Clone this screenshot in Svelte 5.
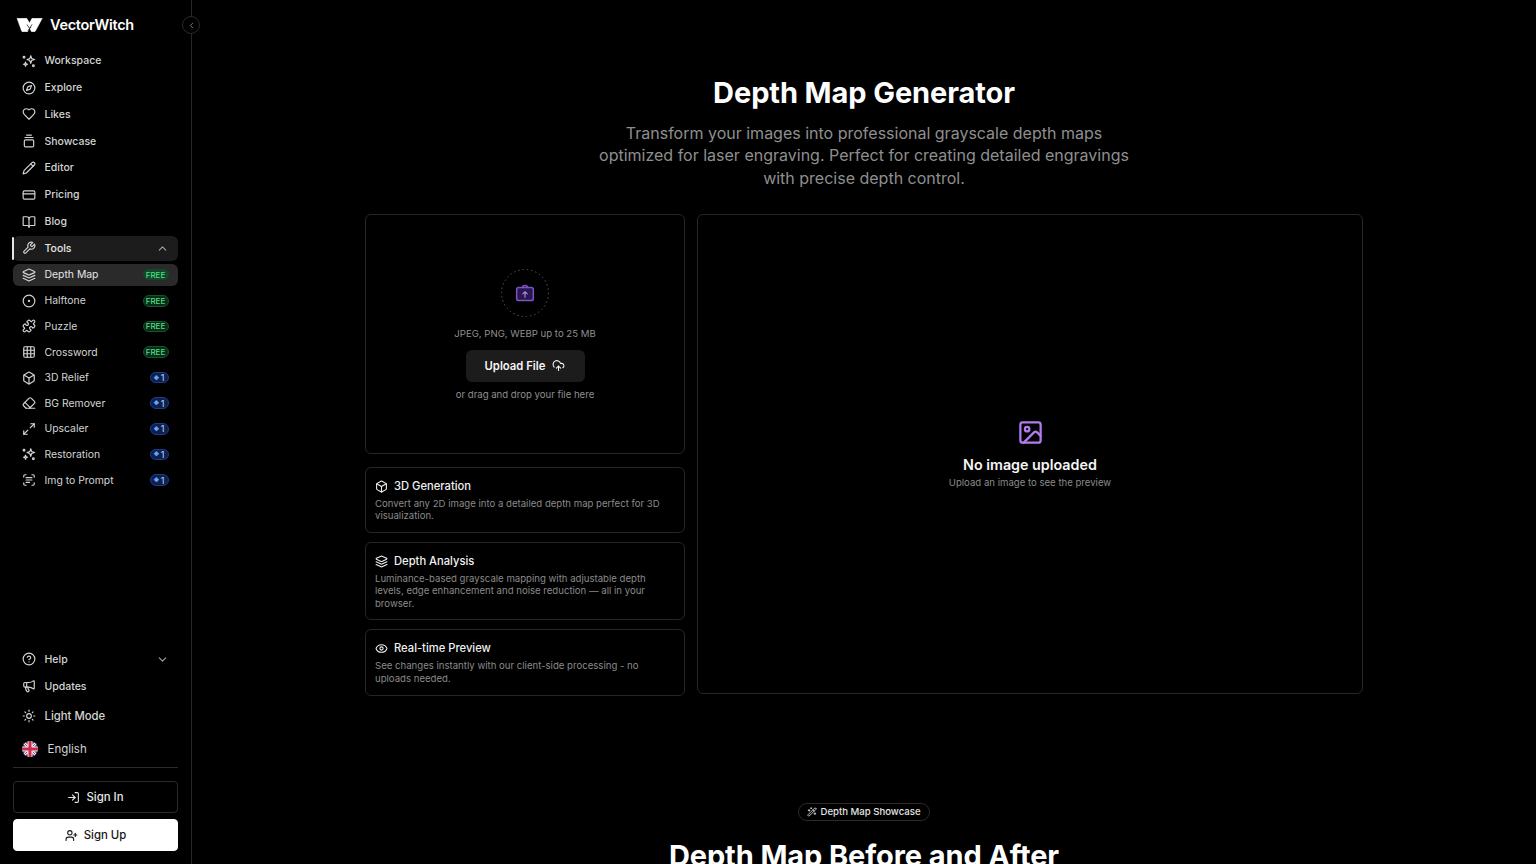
<script>
  const c10 = 'M22 12a10 10 0 1 1-20 0a10 10 0 1 1 20 0';
  const icons = {
    sparkle: ['M15 3l1.6 4.9 4.9 1.6-4.9 1.6L15 16l-1.6-4.9-4.9-1.6 4.9-1.6z', 'M6 14l.9 2.6 2.6.9-2.6.9L6 21l-.9-2.6-2.6-.9 2.6-.9z', 'M5 5.5a1.5 1.5 0 1 1-3 0a1.5 1.5 0 1 1 3 0', 'M21 20a1.5 1.5 0 1 1-3 0a1.5 1.5 0 1 1 3 0'],
    compass: [c10, 'm16.24 7.76-1.804 5.411a2 2 0 0 1-1.265 1.265L7.76 16.24l1.804-5.411a2 2 0 0 1 1.265-1.265z'],
    heart: ['M19 14c1.49-1.46 3-3.21 3-5.5A5.5 5.5 0 0 0 16.5 3c-1.76 0-3 .5-4.5 2-1.5-1.5-2.74-2-4.5-2A5.5 5.5 0 0 0 2 8.5c0 2.3 1.5 4.05 3 5.5l7 7Z'],
    gallery: ['M8 2h8', 'M5 6h14', 'M6 10h12a2 2 0 0 1 2 2v8a2 2 0 0 1-2 2H6a2 2 0 0 1-2-2v-8a2 2 0 0 1 2-2z'],
    pencil: ['M21.174 6.812a1 1 0 0 0-3.986-3.987L3.842 16.174a2 2 0 0 0-.5.83l-1.321 4.352a.5.5 0 0 0 .623.622l4.353-1.32a2 2 0 0 0 .83-.497z', 'm15 5 4 4'],
    card: ['M4 5h16a2 2 0 0 1 2 2v10a2 2 0 0 1-2 2H4a2 2 0 0 1-2-2V7a2 2 0 0 1 2-2z', 'M2 10h20'],
    book: ['M12 7v14', 'M3 18a1 1 0 0 1-1-1V4a1 1 0 0 1 1-1h5a4 4 0 0 1 4 4 4 4 0 0 1 4-4h5a1 1 0 0 1 1 1v13a1 1 0 0 1-1 1h-6a3 3 0 0 0-3 3 3 3 0 0 0-3-3z'],
    wrench: ['M14.7 6.3a1 1 0 0 0 0 1.4l1.6 1.6a1 1 0 0 0 1.4 0l3.77-3.77a6 6 0 0 1-7.94 7.94l-6.91 6.91a2.12 2.12 0 0 1-3-3l6.91-6.91a6 6 0 0 1 7.94-7.94l-3.76 3.76z'],
    up: ['m18 15-6-6-6 6'],
    down: ['m6 9 6 6 6-6'],
    left: ['m15 18-6-6 6-6'],
    layers: ['M12.83 2.18a2 2 0 0 0-1.66 0L2.6 6.08a1 1 0 0 0 0 1.83l8.58 3.91a2 2 0 0 0 1.66 0l8.58-3.9a1 1 0 0 0 0-1.83Z', 'm22 17.65-9.17 4.16a2 2 0 0 1-1.66 0L2 17.65', 'm22 12.65-9.17 4.16a2 2 0 0 1-1.66 0L2 12.65'],
    dot: [c10, 'M13 12a1 1 0 1 1-2 0a1 1 0 1 1 2 0'],
    puzzle: ['M19.439 7.85c-.049.322.059.648.289.878l1.568 1.568c.47.47.706 1.087.706 1.704s-.235 1.233-.706 1.704l-1.611 1.611a.98.98 0 0 1-.837.276c-.47-.07-.802-.48-.968-.925a2.501 2.501 0 1 0-3.214 3.214c.446.166.855.497.925.968a.979.979 0 0 1-.276.837l-1.61 1.61a2.404 2.404 0 0 1-1.705.707 2.402 2.402 0 0 1-1.704-.706l-1.568-1.568a1.026 1.026 0 0 0-.877-.29c-.493.074-.84.504-1.02.968a2.5 2.5 0 1 1-3.237-3.237c.464-.18.894-.527.967-1.02a1.026 1.026 0 0 0-.289-.877l-1.568-1.568A2.402 2.402 0 0 1 1.998 12c0-.617.236-1.234.706-1.704L4.23 8.77c.24-.24.581-.353.917-.303.515.077.877.528 1.073 1.01a2.5 2.5 0 1 0 3.259-3.259c-.482-.196-.933-.558-1.01-1.073-.05-.336.062-.676.303-.917l1.525-1.525A2.402 2.402 0 0 1 12 1.998c.617 0 1.234.236 1.704.706l1.568 1.568c.23.23.556.338.877.29.493-.074.84-.504 1.02-.968a2.5 2.5 0 1 1 3.237 3.237c-.464.18-.894.527-.967 1.02Z'],
    grid: ['M5 3h14a2 2 0 0 1 2 2v14a2 2 0 0 1-2 2H5a2 2 0 0 1-2-2V5a2 2 0 0 1 2-2z', 'M3 9h18', 'M3 15h18', 'M9 3v18', 'M15 3v18'],
    box: ['M21 8a2 2 0 0 0-1-1.73l-7-4a2 2 0 0 0-2 0l-7 4A2 2 0 0 0 3 8v8a2 2 0 0 0 1 1.73l7 4a2 2 0 0 0 2 0l7-4A2 2 0 0 0 21 16Z', 'm3.3 7 8.7 5 8.7-5', 'M12 22V12'],
    eraser: ['m7 21-4.3-4.3c-1-1-1-2.5 0-3.4l9.6-9.6c1-1 2.5-1 3.4 0l5.6 5.6c1 1 1 2.5 0 3.4L13 21', 'M22 21H7', 'm5 11 9 9'],
    expand: ['M15 3h6v6', 'm21 3-7 7', 'M3 15v6h6', 'm3 21 7-7'],
    scan: ['M3 7V5a2 2 0 0 1 2-2h2', 'M17 3h2a2 2 0 0 1 2 2v2', 'M21 17v2a2 2 0 0 1-2 2h-2', 'M7 21H5a2 2 0 0 1-2-2v-2', 'M7 8h10', 'M7 12h10', 'M7 16h6'],
    help: [c10, 'M9.09 9a3 3 0 0 1 5.83 1c0 2-3 3-3 3', 'M12 17h.01'],
    mega: ['M11 6a13 13 0 0 0 8.4-2.8A1 1 0 0 1 21 4v12a1 1 0 0 1-1.6.8A13 13 0 0 0 11 14H5a2 2 0 0 1-2-2V8a2 2 0 0 1 2-2z', 'M6 14a12 12 0 0 0 2.4 7.2 2 2 0 0 0 3.2-2.4A8 8 0 0 1 10 14', 'M8 6v8'],
    sun: ['M16 12a4 4 0 1 1-8 0a4 4 0 1 1 8 0', 'M12 2v2', 'M12 20v2', 'm4.93 4.93 1.41 1.41', 'm17.66 17.66 1.41 1.41', 'M2 12h2', 'M20 12h2', 'm6.34 17.66-1.41 1.41', 'm19.07 4.93-1.41 1.41'],
    login: ['m10 17 5-5-5-5', 'M15 12H3', 'M15 3h4a2 2 0 0 1 2 2v14a2 2 0 0 1-2 2h-4'],
    userplus: ['M16 21v-2a4 4 0 0 0-4-4H6a4 4 0 0 0-4 4v2', 'M13 7a4 4 0 1 1-8 0a4 4 0 1 1 8 0', 'M19 8v6', 'M22 11h-6'],
    cloud: ['M12 13v8', 'M4 14.899A7 7 0 1 1 15.71 8h1.79a4.5 4.5 0 0 1 2.5 8.242', 'm8 17 4-4 4 4'],
    eye: ['M2.062 12.348a1 1 0 0 1 0-.696 10.75 10.75 0 0 1 19.876 0 1 1 0 0 1 0 .696 10.75 10.75 0 0 1-19.876 0', 'M15 12a3 3 0 1 1-6 0a3 3 0 1 1 6 0'],
    image: ['M5 3h14a2 2 0 0 1 2 2v14a2 2 0 0 1-2 2H5a2 2 0 0 1-2-2V5a2 2 0 0 1 2-2z', 'M11 9a2 2 0 1 1-4 0a2 2 0 1 1 4 0', 'm21 15-3.086-3.086a2 2 0 0 0-2.828 0L6 21'],
    wand: ['m21.64 3.64-1.28-1.28a1.21 1.21 0 0 0-1.72 0L2.36 18.64a1.21 1.21 0 0 0 0 1.72l1.28 1.28a1.2 1.2 0 0 0 1.72 0L21.64 5.36a1.2 1.2 0 0 0 0-1.72', 'm14 7 3 3', 'M5 6v4', 'M19 14v4', 'M10 2v2', 'M7 8H3', 'M21 16h-4', 'M11 3H9']
  };
  const primary = [
    ['sparkle', 'Workspace'], ['compass', 'Explore'], ['heart', 'Likes'], ['gallery', 'Showcase'],
    ['pencil', 'Editor'], ['card', 'Pricing'], ['book', 'Blog']
  ];
  const tools = [
    ['layers', 'Depth Map', 'free', true], ['dot', 'Halftone', 'free'], ['puzzle', 'Puzzle', 'free'], ['grid', 'Crossword', 'free'],
    ['box', '3D Relief', 'credit'], ['eraser', 'BG Remover', 'credit'], ['expand', 'Upscaler', 'credit'],
    ['sparkle', 'Restoration', 'credit'], ['scan', 'Img to Prompt', 'credit']
  ];
  const features = [
    ['box', '3D Generation', 'Convert any 2D image into a detailed depth map perfect for 3D visualization.'],
    ['layers', 'Depth Analysis', 'Luminance-based grayscale mapping with adjustable depth levels, edge enhancement and noise reduction — all in your browser.'],
    ['eye', 'Real-time Preview', 'See changes instantly with our client-side processing - no uploads needed.']
  ];
</script>

{#snippet icon(name, size, cls = '')}
  <svg class={cls} width={size} height={size} viewBox="0 0 24 24" fill="none" stroke="currentColor" stroke-width="2" stroke-linecap="round" stroke-linejoin="round" aria-hidden="true">
    {#each icons[name] as d}<path {d} />{/each}
  </svg>
{/snippet}

<div class="app">
  <aside class="sidebar">
    <div class="brand">
      <svg class="logo" width="27" height="14" viewBox="0 0 27 14" aria-hidden="true">
        <path d="M1 .3H10.700L13.500 5 16 .3H26.300L19.300 13.200Q19 13.700 18.500 13.700H15.500L13.500 10 11.500 13.700H6.500Q6 13.700 5.700 13.200Z" fill="#fff" stroke="#fff" stroke-width=".5" stroke-linejoin="round" />
        <path d="M11 6.500 13.500 10.500 16 6.500M12 12.500 15 9" fill="none" stroke="#000" stroke-width=".7" />
      </svg>
      <span class="brand-name">VectorWitch</span>
    </div>
    <button class="collapse" aria-label="Collapse sidebar">{@render icon('left', 9)}</button>

    <nav class="nav">
      {#each primary as [ic, label]}
        <div class="item">{@render icon(ic, 14, 'ico')}<span>{label}</span></div>
      {/each}
      <div class="item open">
        {@render icon('wrench', 14, 'ico')}<span>Tools</span>{@render icon('up', 13, 'chev')}
      </div>
    </nav>
    <div class="tools">
      {#each tools as [ic, label, kind, active]}
        <div class="tool" class:active>
          {@render icon(ic, 14, 'ico')}<span>{label}</span>
          {#if kind === 'free'}
            <em class="badge free">FREE</em>
          {:else}
            <em class="badge credit"><i>◆</i>1</em>
          {/if}
        </div>
      {/each}
    </div>

    <div class="foot">
      <div class="item">{@render icon('help', 14, 'ico')}<span>Help</span>{@render icon('down', 13, 'chev')}</div>
      <div class="item">{@render icon('mega', 14, 'ico')}<span>Updates</span></div>
      <div class="item big light">{@render icon('sun', 14, 'ico')}<span>Light Mode</span></div>
      <div class="item big lang">
        <svg class="flag" width="16" height="16" viewBox="0 0 16 16" aria-hidden="true">
          <defs><clipPath id="fc"><circle cx="8" cy="8" r="8" /></clipPath></defs>
          <g clip-path="url(#fc)">
            <rect width="16" height="16" fill="#2b3a7e" />
            <path d="M0 0L16 16M16 0L0 16" stroke="#eee" stroke-width="3" />
            <path d="M0 0L16 16M16 0L0 16" stroke="#cf2a4a" stroke-width="1" />
            <path d="M8 0V16M0 8H16" stroke="#eee" stroke-width="5" />
            <path d="M8 0V16M0 8H16" stroke="#cf2a4a" stroke-width="3" />
          </g>
        </svg>
        <span>English</span>
      </div>
      <div class="rule"></div>
      <button class="btn signin">{@render icon('login', 13)}Sign In</button>
      <button class="btn signup">{@render icon('userplus', 13)}Sign Up</button>
    </div>
  </aside>

  <main class="main">
    <header class="head">
      <h1>Depth Map Generator</h1>
      <p>Transform your images into professional grayscale depth maps optimized for laser engraving. Perfect for creating detailed engravings with precise depth control.</p>
    </header>

    <section class="work">
      <div class="left">
        <div class="card upload">
          <div class="ring">
            <svg class="dots" width="48" height="48" viewBox="0 0 48 48" aria-hidden="true">
              <circle cx="24" cy="24" r="23.500" fill="none" stroke="#555" stroke-width="1" stroke-dasharray="1.500 2.800" />
            </svg>
            <svg class="bag" width="20" height="20" viewBox="0 0 24 24" fill="#2a1650" stroke="#7d52c4" stroke-width="1.800" stroke-linecap="round" stroke-linejoin="round" aria-hidden="true">
              <path d="M9 5.500C9 3.800 10 3 12 3s3 .8 3 2.500" fill="none" />
              <rect x="2" y="5.500" width="20" height="15.500" rx="2.500" />
              <path d="M12 17v-6.500M9.300 13 12 10.500l2.700 2.500" fill="none" stroke="#a98ad8" stroke-width="1.400" />
            </svg>
          </div>
          <div class="hint">JPEG, PNG, WEBP up to 25 MB</div>
          <button class="upbtn">Upload File{@render icon('cloud', 13)}</button>
          <div class="hint alt">or drag and drop your file here</div>
        </div>
        {#each features as [ic, title, text]}
          <div class="card feature">
            <div class="ftitle">{@render icon(ic, 13)}<span>{title}</span></div>
            <p>{text}</p>
          </div>
        {/each}
      </div>
      <div class="card preview">
        <span class="pic">{@render icon('image', 27)}</span>
        <div class="ptitle">No image uploaded</div>
        <div class="psub">Upload an image to see the preview</div>
      </div>
    </section>

    <section class="show">
      <div class="pill">{@render icon('wand', 10)}Depth Map Showcase</div>
      <h2>Depth Map Before and After</h2>
    </section>
  </main>
</div>

<style>
  :global(body) { margin: 0; background: #000; overflow: hidden; }
  * { box-sizing: border-box; }
  .app { display: flex; height: 864px; overflow: hidden; background: #000; color: #fff; font-family: Inter, "Liberation Sans", sans-serif; }
  svg { display: block; flex: none; }

  .sidebar { position: relative; width: 192px; flex: none; height: 100%; border-right: 1px solid #262626; padding: 0 13px 13px; display: flex; flex-direction: column; }
  .brand { height: 47.400px; display: flex; align-items: center; gap: 7px; padding: 2px 0 0 3px; flex: none; }
  .brand-name { font-size: 14.500px; font-weight: 600; letter-spacing: -0.3px; }
  .collapse { position: absolute; top: 16px; right: -9px; width: 18px; height: 18px; border-radius: 50%; border: 1px solid #2a2a2a; background: #000; color: #a3a3a3; display: flex; align-items: center; justify-content: center; padding: 0; z-index: 2; }

  .nav { display: flex; flex-direction: column; flex: none; }
  .item { height: 26.800px; display: flex; align-items: center; gap: 8.500px; padding: 0 9.500px 0 9px; font-size: 10.500px; font-weight: 500; color: #d4d4d4; border-radius: 6px; flex: none; }
  .item span { flex: 1; }
  .ico { color: #d4d4d4; }
  .chev { color: #a3a3a3; }
  .open { position: relative; background: #1c1c1c; color: #e5e5e5; height: 25px; margin-top: .6px; }
  .open::before { content: ""; position: absolute; left: -1px; top: 1px; bottom: 1px; width: 2px; background: #e5e5e5; border-radius: 1px; }

  .tools { display: flex; flex-direction: column; margin-top: 3px; flex: none; }
  .tool { height: 25.600px; display: flex; align-items: center; gap: 8.500px; padding: 0 9.500px 0 9px; font-size: 10.400px; font-weight: 400; color: #d4d4d4; border-radius: 6px; flex: none; }
  .tool span { flex: 1; }
  .tool.active { background: #2a2a2a; height: 22px; margin-bottom: 2.500px; color: #e5e5e5; }
  .badge { font-style: normal; font-size: 8px; font-weight: 500; border-radius: 6px; height: 11.500px; display: flex; align-items: center; justify-content: center; }
  .free { width: 26px; background: #0c2c18; border: 1px solid #14532d; color: #4ade80; }
  .active .free { background: #15472a; border-color: #15472a; }
  .credit { width: 19px; background: #10204a; border: 1px solid #1e3a8a; color: #93c5fd; font-size: 9px; }
  .credit i { font-style: normal; font-size: 5.500px; margin-right: 1.500px; color: #60a5fa; }

  .foot { margin-top: auto; display: flex; flex-direction: column; }
  .big { font-size: 11.300px; font-weight: 500; }
  .light { height: 32.500px; color: #d4d4d4; }
  .lang { height: 34px; gap: 9.500px; padding-left: 9px; font-weight: 400; font-size: 11.500px; }
  .rule { height: 1px; background: #2a2a2a; margin: 1px 0 13px; }
  .btn { height: 32px; border-radius: 4px; font: 500 11.400px Inter, "Liberation Sans", sans-serif; display: flex; align-items: center; justify-content: center; gap: 6px; padding: 0; }
  .signin { background: #000; border: 1px solid #2a2a2a; color: #e5e5e5; margin-bottom: 6px; }
  .signup { background: #fff; border: 1px solid #fff; color: #171717; }

  .main { flex: 1; min-width: 0; display: flex; flex-direction: column; align-items: center; padding-top: 73px; }
  .head { text-align: center; }
  h1 { margin: 0; font-size: 29px; line-height: 40px; font-weight: 700; letter-spacing: -0.1px; }
  .head p { margin: 8.500px auto 0; width: 540px; font-size: 16px; line-height: 22.500px; color: #8f8f8f; }

  .work { width: 998px; margin-top: 24.500px; display: grid; grid-template-columns: 320px 666px; gap: 12px; align-items: start; }
  .left { display: flex; flex-direction: column; gap: 9px; }
  .card { border: 1px solid #262626; border-radius: 6px; background: #000; }
  .upload { height: 240px; margin-bottom: 4px; display: flex; flex-direction: column; align-items: center; padding-top: 54px; }
  .ring { width: 48px; height: 48px; display: grid; place-items: center; }
  .ring > svg { grid-area: 1 / 1; }
  .hint { font-size: 9.600px; line-height: 14px; color: #8f8f8f; margin-top: 10.500px; }
  .hint.alt { margin-top: 6.500px; }
  .upbtn { margin-top: 8.500px; width: 119px; height: 32px; border: 0; border-radius: 6px; background: #1c1c1c; color: #f5f5f5; font: 600 11.300px Inter, "Liberation Sans", sans-serif; display: flex; align-items: center; justify-content: center; gap: 7px; padding: 0; }

  .feature { padding: 11px 9px 8.500px; }
  .ftitle { display: flex; align-items: center; gap: 6px; font-size: 11.200px; font-weight: 500; line-height: 15px; color: #f0f0f0; }
  .feature p { margin: 4px 0 0; font-size: 9.600px; line-height: 12.800px; color: #8a8a8a; }

  .preview { height: 480px; padding-top: 2px; display: flex; flex-direction: column; align-items: center; justify-content: center; }
  .pic { color: #b07cf0; display: block; }
  .ptitle { margin-top: 9px; font-size: 14.300px; line-height: 20px; font-weight: 600; color: #f5f5f5; }
  .psub { margin-top: 1px; font-size: 9.600px; line-height: 14px; color: #8a8a8a; }

  .show { margin-top: 107px; display: flex; flex-direction: column; align-items: center; }
  .pill { height: 18px; padding: 0 8px; border: 1px solid #2a2a2a; border-radius: 9px; display: flex; align-items: center; gap: 3px; font-size: 9.600px; font-weight: 500; color: #e5e5e5; }
  h2 { margin: 15px 0 0; font-size: 29px; line-height: 40px; font-weight: 700; letter-spacing: -0.1px; white-space: nowrap; }
</style>
